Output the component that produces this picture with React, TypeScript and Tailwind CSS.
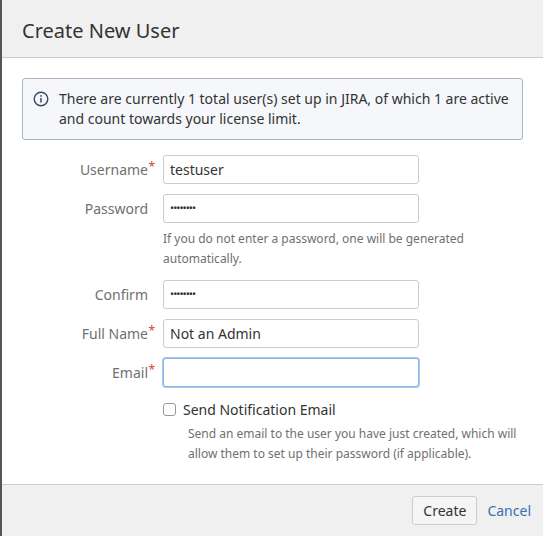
import React from "react";

const Req = () => <span className="absolute -right-[7px] -top-[2px] text-[12px] text-[#d04437]">*</span>;

function Row({ label, req, value, password, focus }: { label: string; req?: boolean; value?: string; password?: boolean; focus?: boolean }) {
  return (
    <div className="flex items-center">
      <div className="w-[126px] text-right text-[14px] text-[#707070]">
        <span className="relative">{label}{req && <Req />}</span>
      </div>
      <div
        className={
          "ml-[15px] flex h-[29px] w-[256px] items-center rounded-[3px] border bg-white px-[6px] text-[14px] text-[#333] " +
          (focus ? "border-[#8fb4e8] shadow-[0_0_0_1px_#a9c6ef]" : "border-[#ccc]")
        }
      >
        {password ? <span className="text-[11px] tracking-[-1px]">••••••••</span> : value}
      </div>
    </div>
  );
}

export default function App() {
  return (
    <div className="flex h-[536px] w-[543px] flex-col border-l-2 border-[#555] bg-white font-[family-name:'Liberation_Sans',Arial,sans-serif] text-[#333]">
      <div className="h-[58px] shrink-0 border-b border-[#ccc] bg-[#f0f0f0] px-[20px] pt-[19px] text-[20px] leading-[24px] text-[#333]">Create New User</div>
      <div className="flex-1 px-[20px] pt-[20px]">
        <div className="flex rounded-[3px] border border-[#a9b4c4] bg-[#f5f7fa] px-[10px] py-[10px] text-[14px] leading-[20px]">
          <svg className="mr-[10px] mt-[2px] h-[16px] w-[16px] shrink-0" viewBox="0 0 16 16">
            <circle cx="8" cy="8" r="6.8" fill="none" stroke="#3b4a63" strokeWidth="1.4" />
            <rect x="7.25" y="7" width="1.5" height="4.5" fill="#3b4a63" />
            <circle cx="8" cy="4.9" r="0.9" fill="#3b4a63" />
          </svg>
          <span>There are currently 1 total user(s) set up in JIRA, of which 1 are active and count towards your license limit.</span>
        </div>
        <div className="mt-[15px] flex flex-col">
          <Row label="Username" req value="testuser" />
          <div className="mt-[10px]"><Row label="Password" password /></div>
          <div className="ml-[141px] mt-[6px] text-[12px] leading-[20px] text-[#707070]">If you do not enter a password, one will be generated<br />automatically.</div>
          <div className="mt-[11px]"><Row label="Confirm" password /></div>
          <div className="mt-[10px]"><Row label="Full Name" req value="Not an Admin" /></div>
          <div className="mt-[10px]"><Row label="Email" req focus /></div>
          <div className="ml-[141px] mt-[12px] flex items-center text-[14px]">
            <span className="h-[13px] w-[13px] rounded-[3px] border border-[#999] bg-white" />
            <span className="ml-[7px]">Send Notification Email</span>
          </div>
          <div className="ml-[166px] mt-[4px] text-[12px] leading-[20px] text-[#707070]">Send an email to the user you have just created, which will allow them to set up their password (if applicable).</div>
        </div>
      </div>
      <div className="flex h-[52px] shrink-0 items-center justify-end border-t border-[#ccc] bg-[#f0f0f0] pr-[12px]">
        <button className="h-[29px] rounded-[3px] border border-[#ccc] bg-[#f5f5f5] px-[10px] text-[14px] text-[#333]">Create</button>
        <span className="ml-[10px] text-[14px] text-[#3572b0]">Cancel</span>
      </div>
    </div>
  );
}
